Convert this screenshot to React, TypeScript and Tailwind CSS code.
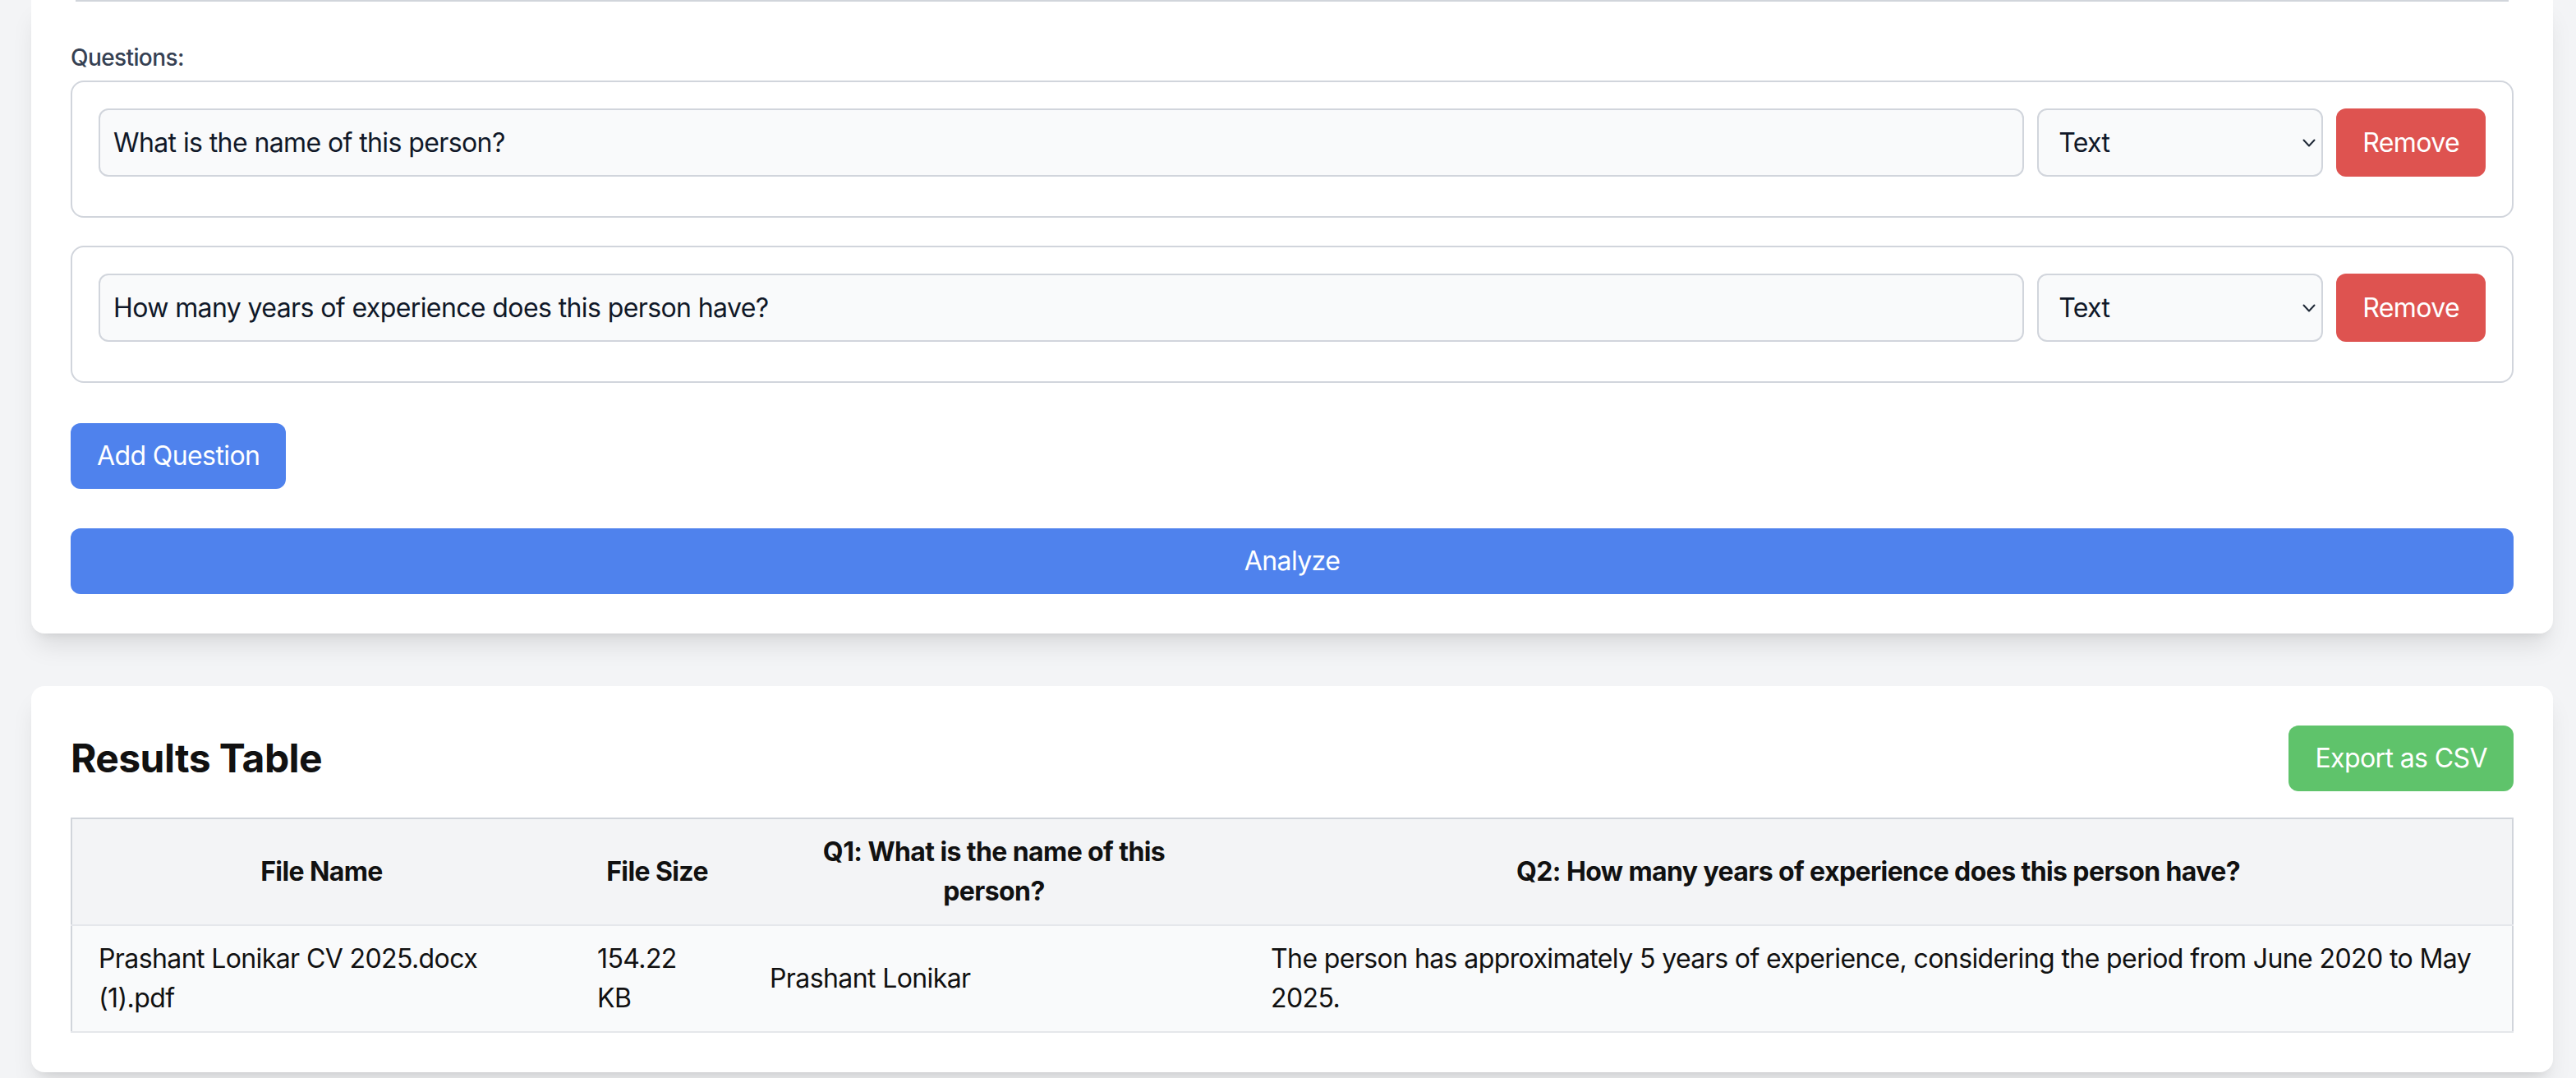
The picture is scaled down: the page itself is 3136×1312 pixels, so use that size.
import { useState } from "react";

type Question = {
  id: number;
  text: string;
  type: string;
};

const initialQuestions: Question[] = [
  { id: 1, text: "What is the name of this person?", type: "Text" },
  { id: 2, text: "How many years of experience does this person have?", type: "Text" },
];

const results = [
  {
    fileName: "Prashant Lonikar CV 2025.docx (1).pdf",
    fileSize: "154.22 KB",
    answers: [
      "Prashant Lonikar",
      "The person has approximately 5 years of experience, considering the period from June 2020 to May 2025.",
    ],
  },
];

function Chevron() {
  return (
    <svg width="16" height="10" viewBox="0 0 16 10" fill="none" stroke="#1f2937" strokeWidth="2" strokeLinecap="round" strokeLinejoin="round">
      <path d="M1.5 1.5 8 8.5l6.5-7" />
    </svg>
  );
}

function QuestionRow({ question, onRemove }: { question: Question; onRemove: () => void }) {
  return (
    <div className="rounded-2xl border-2 border-gray-300 px-8 pt-8 pb-12">
      <div className="flex gap-4">
        <input
          defaultValue={question.text}
          className="h-[83px] flex-1 rounded-xl border-2 border-gray-300 bg-gray-50 px-4 text-[32px] text-gray-900 outline-none"
        />
        <div className="relative w-[348px]">
          <select
            defaultValue={question.type}
            className="h-[83px] w-full appearance-none rounded-xl border-2 border-gray-300 bg-gray-50 pl-6 text-[32px] text-gray-900 outline-none"
          >
            <option>Text</option>
            <option>Number</option>
            <option>Date</option>
          </select>
          <span className="pointer-events-none absolute top-1/2 right-[9px] flex -translate-y-1/2">
            <Chevron />
          </span>
        </div>
        <button onClick={onRemove} className="h-[83px] rounded-xl bg-[#de5350] px-8 text-[32px] text-white">
          Remove
        </button>
      </div>
    </div>
  );
}

export default function App() {
  const [questions, setQuestions] = useState(initialQuestions);

  return (
    <div className="min-h-screen bg-[#f3f4f6] pr-[28px] pb-[10px] pl-[38px] font-[Inter,sans-serif] tracking-[-0.6px] text-gray-900">
      {/* question form, scrolled so that only its lower part shows */}
      <div className="rounded-b-2xl bg-white px-12 pb-12 shadow-[0_20px_30px_-6px_rgba(0,0,0,0.1),0_8px_12px_-8px_rgba(0,0,0,0.1)]">
        <div className="mx-[6px] h-[2px] bg-[#d1d5db]" />
        <label className="mt-[48px] mb-2 block text-[28px] leading-[40px] font-medium text-gray-700">Questions:</label>
        <div className="flex flex-col gap-[34px]">
          {questions.map((q) => (
            <QuestionRow key={q.id} question={q} onRemove={() => setQuestions(questions.filter((x) => x.id !== q.id))} />
          ))}
        </div>
        <button
          onClick={() => setQuestions([...questions, { id: Date.now(), text: "", type: "Text" }])}
          className="mt-[49px] h-[80px] rounded-xl bg-[#4f82ed] px-8 text-[32px] text-white"
        >
          Add Question
        </button>
        <button className="mt-12 block h-[80px] w-full rounded-xl bg-[#4f82ed] text-[32px] text-white">Analyze</button>
      </div>

      <div className="mt-[64px] rounded-2xl bg-white p-12 shadow-[0_20px_30px_-6px_rgba(0,0,0,0.1),0_8px_12px_-8px_rgba(0,0,0,0.1)]">
        <div className="mb-8 flex items-center justify-between">
          <h2 className="text-[48px] leading-[64px] font-bold text-[#111]">Results Table</h2>
          <button className="h-[80px] rounded-xl bg-[#5fc36b] px-8 text-[32px] text-white">Export as CSV</button>
        </div>
        <table className="w-full table-fixed border-collapse border-2 border-[#d1d5db] text-[32px] leading-[48px]">
          <colgroup>
            <col className="w-[608px]" />
            <col className="w-[210px]" />
            <col className="w-[610px]" />
            <col />
          </colgroup>
          <thead>
            <tr className="border-b-2 border-[#e5e7eb] bg-[#f3f4f6]">
              <th className="px-8 py-4 text-center font-bold text-[#111]">File Name</th>
              <th className="px-8 py-4 text-center font-bold text-[#111]">File Size</th>
              {questions.map((q, i) => (
                <th key={q.id} className="px-8 py-4 text-center font-bold text-[#111]">
                  Q{i + 1}: {q.text}
                </th>
              ))}
            </tr>
          </thead>
          <tbody>
            {results.map((r) => (
              <tr key={r.fileName} className="border-b-2 border-[#e5e7eb] bg-[#f9fafb]">
                <td className="px-8 py-4 align-middle text-[#111]">{r.fileName}</td>
                <td className="px-8 py-4 align-middle text-[#111]">{r.fileSize}</td>
                {r.answers.map((a, i) => (
                  <td key={i} className="px-8 py-4 align-middle text-[#111]">
                    {a}
                  </td>
                ))}
              </tr>
            ))}
          </tbody>
        </table>
      </div>
    </div>
  );
}
